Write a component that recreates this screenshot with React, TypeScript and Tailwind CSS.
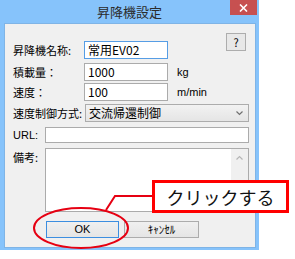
import React from "react";

// 昇降機設定ダイアログ + 注釈
const Field = ({ value, w, focused }: { value: string; w: string; focused?: boolean }) => (
  <div
    className={`${w} h-[18px] bg-white border flex items-center pl-[3px] text-[12px] leading-none text-black ${
      focused ? "border-[#569de5]" : "border-[#ababab]"
    }`}
  >
    {value}
  </div>
);

const App = () => {
  return (
    <div className="relative w-[295px] h-[259px] bg-white overflow-hidden font-['Noto_Sans_CJK_JP',sans-serif] text-black">
      {/* ウィンドウ */}
      <div className="w-[259px] h-[250px] bg-[#86c3fb] flex flex-col">
        <div className="relative h-[23px] flex items-center justify-center">
          <span className="text-[13px] text-[#2b2b2b] leading-none">昇降機設定</span>
          <div className="absolute top-0 right-[2px] w-[27px] h-[15px] bg-[#c75050] flex items-center justify-center">
            <svg width="9" height="8" viewBox="0 0 9 8">
              <path d="M1 0.5 L8 7.5 M8 0.5 L1 7.5" stroke="#fff" strokeWidth="1.6" />
            </svg>
          </div>
        </div>
        <div className="ml-[4px] mr-[3px] mb-[2px] flex-1 bg-[#f0f0f0] border border-[#7fb4e6]">
          <div className="flex flex-col pl-[8px] pr-[6px] pt-[9px] text-[11px] leading-none">
            {/* 名称 */}
            <div className="flex items-start">
              <div className="flex items-center mt-[8px]">
                <span className="w-[71px]">昇降機名称:</span>
                <Field value="常用EV02" w="w-[84px]" focused />
              </div>
              <div className="ml-auto mr-[3px] w-[20px] h-[18px] border border-[#adadad] bg-[#e8e8e8] flex items-center justify-center text-[11px]">
                ?
              </div>
            </div>
            {/* 積載量 */}
            <div className="flex items-center mt-[4px]">
              <span className="w-[71px]">積載量：</span>
              <Field value="1000" w="w-[84px]" />
              <span className="ml-[9px] font-['Liberation_Sans',sans-serif] text-[11px]">kg</span>
            </div>
            {/* 速度 */}
            <div className="flex items-center mt-[2px]">
              <span className="w-[71px]">速度：</span>
              <Field value="100" w="w-[84px]" />
              <span className="ml-[9px] font-['Liberation_Sans',sans-serif] text-[11px]">m/min</span>
            </div>
            {/* 速度制御方式 */}
            <div className="flex items-center mt-[3px]">
              <span className="w-[72px] whitespace-nowrap">速度制御方式:</span>
              <div className="flex-1 h-[18px] border border-[#acacac] bg-gradient-to-b from-[#f2f2f2] to-[#e5e5e5] flex items-center pl-[3px] pr-[5px] text-[12px]">
                <span>交流帰還制御</span>
                <svg className="ml-auto" width="7" height="5" viewBox="0 0 7 5">
                  <path d="M0.5 0.5 L3.5 3.5 L6.5 0.5" stroke="#707070" strokeWidth="1.2" fill="none" />
                </svg>
              </div>
            </div>
            {/* URL */}
            <div className="flex items-center mt-[5px]">
              <span className="w-[32px] font-['Liberation_Sans',sans-serif]">URL:</span>
              <div className="flex-1 h-[16px] bg-white border border-[#ababab]" />
            </div>
            {/* 備考 */}
            <div className="flex items-start mt-[5px]">
              <span className="w-[32px] pt-[4px]">備考:</span>
              <div className="flex-1 h-[64px] bg-white border border-[#ababab] flex justify-end">
                <div className="w-[17px] h-full bg-[#f0f0f0] flex justify-center pt-[6px]">
                  <svg width="7" height="5" viewBox="0 0 7 5">
                    <path d="M0.5 4.5 L3.5 1.5 L6.5 4.5" stroke="#b5b5b5" strokeWidth="1.2" fill="none" />
                  </svg>
                </div>
              </div>
            </div>
            {/* ボタン */}
            <div className="flex items-center mt-[9px] ml-[33px] gap-[5px]">
              <div className="w-[73px] h-[17px] border border-[#3c8ee0] bg-gradient-to-b from-[#f0f0f0] to-[#e5e5e5] flex items-center justify-center font-['Liberation_Sans',sans-serif] text-[11px]">
                OK
              </div>
              <div className="w-[75px] h-[17px] border border-[#acacac] bg-gradient-to-b from-[#f0f0f0] to-[#e5e5e5] flex items-center justify-center text-[11px]">
                ｷｬﾝｾﾙ
              </div>
            </div>
          </div>
        </div>
      </div>

      {/* 注釈 */}
      <svg className="absolute inset-0 pointer-events-none" width="295" height="259" viewBox="0 0 295 259">
        <ellipse cx="81" cy="228" rx="47" ry="20" fill="none" stroke="#e60012" strokeWidth="2" />
        <polyline points="106,210 115,196 153,196" fill="none" stroke="#e60012" strokeWidth="2" />
      </svg>
      <div className="absolute left-[152px] top-[180px] w-[137px] h-[33px] border-[3px] border-[#ff0000] bg-white flex items-center justify-center text-[18px] leading-none text-[#111]">
        クリックする
      </div>
    </div>
  );
};

export default App;
